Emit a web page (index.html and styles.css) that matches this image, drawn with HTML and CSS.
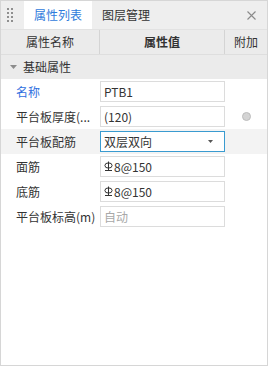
FILE: index.html
```html
<!DOCTYPE html>
<html>
<head>
<meta charset="utf-8">
<link rel="stylesheet" href="styles.css">
</head>
<body>
<div class="panel">
  <div class="tabbar">
    <div class="grip">
      <span></span><span></span><span></span><span></span><span></span><span></span><span></span><span></span>
    </div>
    <div class="tab active">属性列表</div>
    <div class="tab">图层管理</div>
    <div class="spacer"></div>
    <svg class="close" width="9" height="9" viewBox="0 0 9 9"><path d="M0.5 0.5L8.5 8.5M8.5 0.5L0.5 8.5" stroke="#8a8a8a" stroke-width="1.1" fill="none"/></svg>
  </div>
  <div class="header">
    <div class="hcell">属性名称</div>
    <div class="hcell bold">属性值</div>
    <div class="hcell last">附加</div>
  </div>
  <div class="group">
    <svg class="caret" width="7" height="4" viewBox="0 0 7 4"><path d="M0 0H7L3.5 4Z" fill="#8c8c8c"/></svg>
    <span>基础属性</span>
  </div>
  <div class="row">
    <div class="label blue">名称</div>
    <div class="field">PTB1</div>
    <div class="extra"></div>
  </div>
  <div class="row">
    <div class="label">平台板厚度(...</div>
    <div class="field">(120)</div>
    <div class="extra"><span class="dot"></span></div>
  </div>
  <div class="row selected">
    <div class="label">平台板配筋</div>
    <div class="field select">双层双向<svg class="arrow" width="5" height="3" viewBox="0 0 5 3"><path d="M0 0H5L2.5 3Z" fill="#555"/></svg></div>
    <div class="extra"></div>
  </div>
  <div class="row">
    <div class="label">面筋</div>
    <div class="field"><svg class="rebar" width="9" height="11" viewBox="0 0 9 11"><ellipse cx="4.5" cy="4.5" rx="3.6" ry="2.6" fill="none" stroke="#333" stroke-width="1"/><path d="M4.5 0.5V9.5M1 9.5H8" stroke="#333" stroke-width="1" fill="none"/></svg>8@150</div>
    <div class="extra"></div>
  </div>
  <div class="row">
    <div class="label">底筋</div>
    <div class="field"><svg class="rebar" width="9" height="11" viewBox="0 0 9 11"><ellipse cx="4.5" cy="4.5" rx="3.6" ry="2.6" fill="none" stroke="#333" stroke-width="1"/><path d="M4.5 0.5V9.5M1 9.5H8" stroke="#333" stroke-width="1" fill="none"/></svg>8@150</div>
    <div class="extra"></div>
  </div>
  <div class="row">
    <div class="label">平台板标高(m)</div>
    <div class="field placeholder">自动</div>
    <div class="extra"></div>
  </div>
</div>
</body>
</html>
```
FILE: styles.css
```css
html, body {
  margin: 0;
  padding: 0;
  background: #fff;
}
.panel {
  width: 268px;
  height: 366px;
  box-sizing: border-box;
  border: 1px solid #d6d6d6;
  background: #fff;
  font-family: "Noto Sans CJK SC", "Noto Sans", sans-serif;
  font-size: 12px;
  color: #333;
  display: flex;
  flex-direction: column;
}
.tabbar {
  height: 28px;
  background: #eeeeee;
  display: flex;
  align-items: stretch;
}
.grip {
  width: 23px;
  display: grid;
  grid-template-columns: 2px 2px;
  grid-auto-rows: 2px;
  column-gap: 2px;
  row-gap: 2px;
  align-content: center;
  padding-left: 6px;
  box-sizing: border-box;
}
.grip span {
  background: #8f8f8f;
}
.tab {
  width: 68px;
  display: flex;
  align-items: center;
  justify-content: center;
  line-height: 1;
}
.tab.active {
  background: #fff;
  color: #2f7bdc;
}
.spacer {
  flex: 1;
}
.close {
  align-self: center;
  margin-right: 11px;
}
.header {
  height: 24px;
  display: grid;
  grid-template-columns: 99px 125px 1fr;
  background: #ebebeb;
  border-top: 1px solid #e2e2e2;
  border-bottom: 1px solid #dedede;
}
.hcell {
  display: flex;
  align-items: center;
  justify-content: center;
  border-right: 1px solid #d4d4d4;
  line-height: 1;
}
.hcell.bold {
  font-weight: 600;
}
.hcell.last {
  border-right: none;
}
.group {
  height: 24px;
  background: #ebebeb;
  display: flex;
  align-items: center;
  line-height: 1;
}
.caret {
  margin-left: 9px;
  margin-right: 6px;
}
.row {
  height: 25px;
  display: grid;
  grid-template-columns: 99px 125px 1fr;
  align-items: center;
}
.row.selected {
  background: #f3f3f3;
}
.label {
  padding-left: 15px;
  white-space: nowrap;
  line-height: 1;
}
.label.blue {
  color: #2f6fe0;
}
.field {
  height: 21px;
  box-sizing: border-box;
  border: 1px solid #dcdcdc;
  background: #fff;
  display: flex;
  align-items: center;
  padding-left: 3px;
  line-height: 1;
}
.field.select {
  border-color: #3a9bd0;
  justify-content: space-between;
  padding-right: 11px;
}
.field.placeholder {
  color: #a8a8a8;
}
.rebar {
  margin-right: 1px;
  margin-top: -1px;
}
.extra {
  display: flex;
  align-items: center;
  justify-content: center;
}
.dot {
  width: 7px;
  height: 7px;
  border-radius: 50%;
  background: #d4d4d4;
  border: 1px solid #bdbdbd;
}
```
